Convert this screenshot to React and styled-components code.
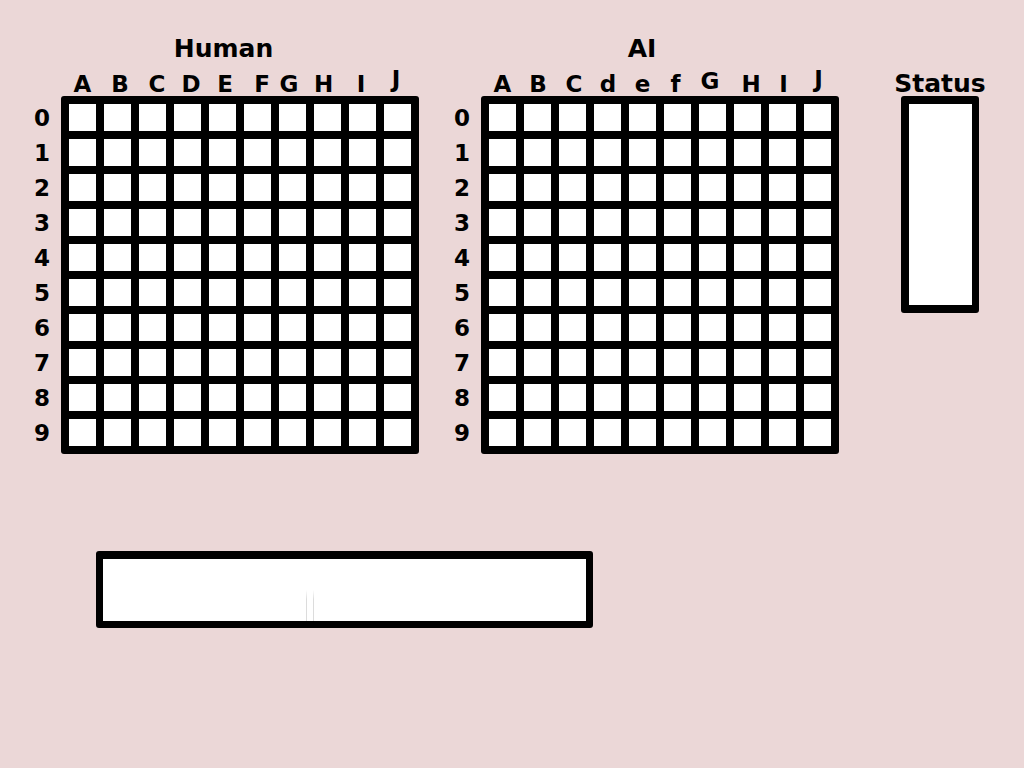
import styled, { createGlobalStyle } from "styled-components";

const GlobalStyle = createGlobalStyle`
  html, body {
    margin: 0;
    padding: 0;
    background: #ebd7d7;
  }
  body {
    font-family: "DejaVu Sans", "Liberation Sans", sans-serif;
    font-weight: bold;
    color: #000;
  }
`;

const Page = styled.div`
  width: 1024px;
  height: 768px;
  box-sizing: border-box;
  padding: 34px 0 0 23px;
  display: flex;
  flex-direction: column;
`;

const TopRow = styled.div`
  display: flex;
  align-items: flex-start;
`;

const Board = styled.section`
  width: 396px;
  display: flex;
  flex-direction: column;
  & + & {
    margin-left: 24px;
  }
`;

const Title = styled.h1`
  margin: 0;
  height: 30px;
  line-height: 30px;
  font-size: 25px;
  font-weight: bold;
  text-align: center;
  transform: translateX(${(p) => p.$dx || 0}px);
`;

const HeaderRow = styled.div`
  display: flex;
  height: 32px;
  box-sizing: border-box;
  padding: 7px 0 0 42px;
`;

const ColLetter = styled.span`
  width: 35px;
  text-align: center;
  font-size: 23px;
  line-height: 26px;
  transform: translate(${(p) => p.$dx}px, ${(p) => p.$dy}px);
`;

const Body = styled.div`
  display: flex;
`;

const RowLabels = styled.div`
  width: 38px;
  display: flex;
  flex-direction: column;
  padding-top: 5px;
`;

const RowLabel = styled.span`
  height: 35px;
  line-height: 35px;
  font-size: 23px;
  text-align: center;
`;

const Grid = styled.div`
  display: grid;
  grid-template-columns: repeat(10, 27px);
  grid-auto-rows: 27px;
  gap: 8px;
  padding: 8px;
  background: #000;
  border-radius: 3px;
`;

const Cell = styled.div`
  background: #fff;
`;

const StatusColumn = styled.aside`
  width: 100px;
  margin-left: 51px;
  padding-top: 37px;
  display: flex;
  flex-direction: column;
  align-items: center;
`;

const StatusTitle = styled.h2`
  margin: 0;
  font-size: 25px;
  line-height: 25px;
  font-weight: bold;
`;

const StatusBox = styled.div`
  width: 78px;
  height: 217px;
  box-sizing: border-box;
  border: 8px solid #000;
  border-right-width: 7px;
  border-radius: 3px;
  background: #fff;
`;

const MessageBox = styled.div`
  margin: 97px 0 0 73px;
  width: 497px;
  height: 77px;
  box-sizing: border-box;
  border: 7px solid #000;
  border-top-width: 8px;
  border-radius: 3px;
  background: #fff;
  display: flex;
  align-items: flex-end;
  gap: 6px;
  padding-left: 203px;
`;

const Caret = styled.span`
  width: 1px;
  height: 31px;
  background: linear-gradient(#fff, #dcdcdc 30%, #dcdcdc);
`;

const humanCols = [
  ["A", 0, 0], ["B", 2.5, 0], ["C", 4.5, 0], ["D", 3.5, 0], ["E", 2.5, 0],
  ["F", 4.5, 0], ["G", -3.5, 0], ["H", -4, 0], ["I", -1.5, 0], ["J", -1.5, -5],
];

const aiCols = [
  ["A", 0, 0], ["B", 0.5, 0], ["C", 1.5, 0], ["d", 0.5, 0], ["e", 0, 0],
  ["f", -2, 0], ["G", -2.5, -3], ["H", 3.5, 0], ["I", 1, 0], ["J", 1, -5],
];

const rows = [0, 1, 2, 3, 4, 5, 6, 7, 8, 9];

const Battlefield = ({ title, cols, titleDx }) => (
  <Board>
    <Title $dx={titleDx}>{title}</Title>
    <HeaderRow>
      {cols.map(([letter, dx, dy]) => (
        <ColLetter key={letter} $dx={dx} $dy={dy}>
          {letter}
        </ColLetter>
      ))}
    </HeaderRow>
    <Body>
      <RowLabels>
        {rows.map((r) => (
          <RowLabel key={r}>{r}</RowLabel>
        ))}
      </RowLabels>
      <Grid>
        {rows.map((r) =>
          cols.map(([letter]) => <Cell key={r + letter} />)
        )}
      </Grid>
    </Body>
  </Board>
);

const App = () => {
  return (
    <Page>
      <GlobalStyle />
      <TopRow>
        <Battlefield title="Human" cols={humanCols} titleDx={2.5} />
        <Battlefield title="AI" cols={aiCols} titleDx={1} />
        <StatusColumn>
          <StatusTitle>Status</StatusTitle>
          <StatusBox />
        </StatusColumn>
      </TopRow>
      <MessageBox>
        <Caret />
        <Caret />
      </MessageBox>
    </Page>
  );
};

export default App;
